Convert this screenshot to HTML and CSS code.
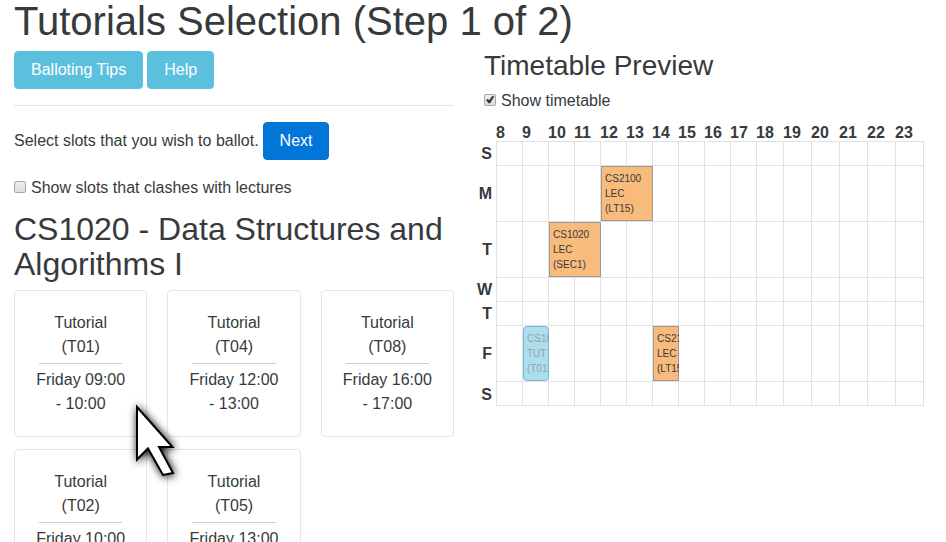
FILE: index.html
```html
<!DOCTYPE html>
<html lang="en">
<head>
<meta charset="utf-8">
<meta name="viewport" content="width=device-width, initial-scale=1">
<title>Tutorials Selection</title>
<link rel="stylesheet" href="styles.css">
</head>
<body>
<main class="page">
  <h1>Tutorials Selection (Step 1 of 2)</h1>
  <div class="columns">
    <section class="selection">
      <div class="actions">
        <button type="button" class="btn btn-info">Balloting Tips</button>
        <button type="button" class="btn btn-info">Help</button>
      </div>
      <hr class="rule">
      <div class="actions">
        <span>Select slots that you wish to ballot.</span>
        <button type="button" class="btn btn-primary">Next</button>
      </div>
      <div class="check clashes">
        <input type="checkbox" id="clashes">
        <label for="clashes">Show slots that clashes with lectures</label>
      </div>
      <h2>CS1020 - Data Structures and Algorithms I</h2>
      <div class="cards">
        <article class="card">
          <p>Tutorial<br>(T01)</p>
          <hr>
          <p>Friday 09:00 - 10:00</p>
          <svg class="cursor" viewBox="0 0 60 90" width="60" height="90" aria-hidden="true">
            <path d="M11 12 L46.500 52 H33 L47 78 L37 80 L22 53.500 L11 64.500 Z"/>
          </svg>
        </article>
        <article class="card">
          <p>Tutorial<br>(T04)</p>
          <hr>
          <p>Friday 12:00 - 13:00</p>
        </article>
        <article class="card">
          <p>Tutorial<br>(T08)</p>
          <hr>
          <p>Friday 16:00 - 17:00</p>
        </article>
        <article class="card">
          <p>Tutorial<br>(T02)</p>
          <hr>
          <p>Friday 10:00</p>
        </article>
        <article class="card">
          <p>Tutorial<br>(T05)</p>
          <hr>
          <p>Friday 13:00</p>
        </article>
      </div>
    </section>
    <section class="preview">
      <h3>Timetable Preview</h3>
      <div class="check">
        <input type="checkbox" id="show" checked>
        <label for="show">Show timetable</label>
      </div>
      <table class="timetable">
        <colgroup>
          <col class="day">
          <col class="hour" span="10">
          <col class="hour-mid">
          <col class="hour-wide" span="4">
          <col class="hour-last">
        </colgroup>
        <thead>
          <tr><td></td><th scope="col">8</th><th scope="col">9</th><th scope="col">10</th><th scope="col">11</th><th scope="col">12</th><th scope="col">13</th><th scope="col">14</th><th scope="col">15</th><th scope="col">16</th><th scope="col">17</th><th scope="col">18</th><th scope="col">19</th><th scope="col">20</th><th scope="col">21</th><th scope="col">22</th><th scope="col">23</th></tr>
        </thead>
        <tbody>
          <tr><th scope="row">S</th><td></td><td></td><td></td><td></td><td></td><td></td><td></td><td></td><td></td><td></td><td></td><td></td><td></td><td></td><td></td><td></td></tr>
          <tr><th scope="row">M</th><td></td><td></td><td></td><td></td><td colspan="2"><div class="slot">CS2100<br>LEC<br>(LT15)</div></td><td></td><td></td><td></td><td></td><td></td><td></td><td></td><td></td><td></td><td></td></tr>
          <tr><th scope="row">T</th><td></td><td></td><td colspan="2"><div class="slot">CS1020<br>LEC<br>(SEC1)</div></td><td></td><td></td><td></td><td></td><td></td><td></td><td></td><td></td><td></td><td></td><td></td><td></td></tr>
          <tr><th scope="row">W</th><td></td><td></td><td></td><td></td><td></td><td></td><td></td><td></td><td></td><td></td><td></td><td></td><td></td><td></td><td></td><td></td></tr>
          <tr><th scope="row">T</th><td></td><td></td><td></td><td></td><td></td><td></td><td></td><td></td><td></td><td></td><td></td><td></td><td></td><td></td><td></td><td></td></tr>
          <tr><th scope="row">F</th><td></td><td><div class="slot slot-hover">CS1020<br>TUT<br>(T01)</div></td><td></td><td></td><td></td><td></td><td><div class="slot">CS2100<br>LEC<br>(LT15)</div></td><td></td><td></td><td></td><td></td><td></td><td></td><td></td><td></td><td></td></tr>
          <tr><th scope="row">S</th><td></td><td></td><td></td><td></td><td></td><td></td><td></td><td></td><td></td><td></td><td></td><td></td><td></td><td></td><td></td><td></td></tr>
        </tbody>
      </table>
    </section>
  </div>
</main>
</body>
</html>
```
FILE: styles.css
```css
* { box-sizing: border-box; }

body {
  margin: 0;
  background: #fff;
  color: #373a3c;
  font-family: "Liberation Sans", Arial, sans-serif;
  font-size: 16px;
  line-height: 24px;
}

.page { padding: 0 22px 0 14px; }

h1, h2, h3 { margin: 0 0 8px; font-weight: 400; }
h1 { font-size: 40px; line-height: 43px; }
h2 { font-size: 32px; line-height: 35px; }
h3 { font-size: 28px; line-height: 30px; }

.columns {
  display: grid;
  grid-template-columns: 1fr 1fr;
  gap: 30px;
  align-items: start;
}

.actions { display: flex; align-items: center; gap: 4px; }

.btn {
  padding: 6px 16px;
  border: 1px solid;
  border-radius: 4px;
  color: #fff;
  font: inherit;
  line-height: 24px;
}
.btn-info { background: #5bc0de; border-color: #5bc0de; }
.btn-primary { background: #0275d8; border-color: #0275d8; }

.rule { margin: 16px 0; border: 0; border-top: 1px solid #e5e5e5; }

.check { display: flex; align-items: center; gap: 5px; }
.clashes { margin: 16px 0 12px; }

.check input {
  appearance: none;
  width: 12px;
  height: 12px;
  margin: 0 0 3px;
  border: 1px solid #a8a8a8;
  border-radius: 2px;
  background: linear-gradient(#ededed, #dedede);
}
.check input:checked::after {
  content: "";
  display: block;
  height: 10px;
  background: #333;
  clip-path: polygon(10% 55%, 28% 45%, 42% 58%, 74% 12%, 92% 22%, 50% 88%, 36% 88%);
}

.cards {
  display: grid;
  grid-template-columns: repeat(3, 1fr);
  gap: 12px 20px;
}
.card {
  position: relative;
  padding: 20px;
  border: 1px solid #e5e5e5;
  border-radius: 4px;
  text-align: center;
}
.card p { margin: 0; }
.card hr { margin: 4px; border: 0; border-top: 1px solid #ccc; }

.cursor {
  position: absolute;
  z-index: 1;
  left: 111px;
  top: 104px;
  overflow: visible;
  fill: #fff;
  stroke: #000;
  stroke-width: 2;
  filter: drop-shadow(1px 1px 4px #000);
}

.timetable {
  width: calc(100% + 10px);
  margin: 12px 0 0 -10px;
  border-collapse: separate;
  border-spacing: 0;
  table-layout: fixed;
}
.day { width: 22px; }
.hour { width: 26px; }
.hour-mid { width: 27px; }
.hour-wide { width: 28px; }
.hour-last { width: 29px; }

.timetable th, .timetable td { padding: 0; }
.timetable thead th { text-align: left; line-height: 16px; }
.timetable tbody th { padding: 2px 4px 0 0; text-align: right; line-height: 22px; }
.timetable tbody td {
  height: 24px;
  border-top: 1px solid #e1e1e1;
  border-left: 1px solid #e1e1e1;
}
.timetable tbody td:last-child { border-right: 1px solid #e1e1e1; }
.timetable tbody tr:last-child td { height: 25px; border-bottom: 1px solid #e1e1e1; }

.slot {
  position: relative;
  margin-right: -1px;
  padding: 4px 3px;
  border: 1px solid #999;
  background: #f8bb7c;
  font-size: 10px;
  line-height: 15px;
  white-space: nowrap;
  overflow: clip;
  overflow-clip-margin: border-box;
}
.slot-hover {
  border-color: #77b5e8;
  border-radius: 4px;
  background: #acdfee;
  color: #999fa3;
}
```
